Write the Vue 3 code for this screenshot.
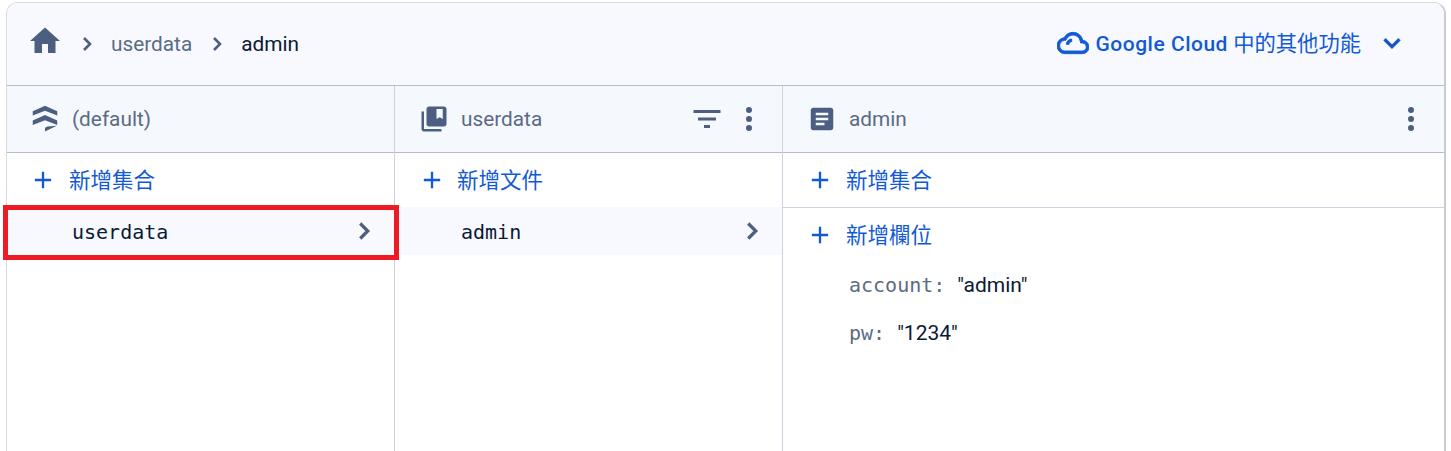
<script setup>
const columns = [
  { key: 'root', title: '(default)', add: '新增集合', item: 'userdata' },
  { key: 'coll', title: 'userdata', add: '新增文件', item: 'admin' }
]
const fields = [
  { name: 'account', value: '"admin"' },
  { name: 'pw', value: '"1234"' }
]
</script>

<template>
  <div class="page">
    <section class="card">
      <header class="topbar">
        <svg class="home" viewBox="0 0 24 24"><path d="M10 20v-6h4v6h5v-8h3L12 3 2 12h3v8z" /></svg>
        <svg class="crumb-arrow first" viewBox="0 0 24 24"><path d="M9 6l6 6-6 6" /></svg>
        <span class="crumb">userdata</span>
        <svg class="crumb-arrow" viewBox="0 0 24 24"><path d="M9 6l6 6-6 6" /></svg>
        <span class="crumb current">admin</span>
        <div class="more">
          <svg class="cloud" viewBox="0 0 24 24"><path d="M19.35 10.04A7.49 7.49 0 0 0 12 4C9.11 4 6.6 5.64 5.35 8.04A5.994 5.994 0 0 0 0 14c0 3.31 2.69 6 6 6h13c2.76 0 5-2.24 5-5 0-2.64-2.05-4.78-4.65-4.96zM19 18H6c-2.21 0-4-1.79-4-4 0-2.05 1.53-3.76 3.56-3.97l1.07-.11.5-.95A5.469 5.469 0 0 1 12 6c2.62 0 4.88 1.86 5.39 4.43l.3 1.5 1.53.11A2.98 2.98 0 0 1 22 15c0 1.65-1.35 3-3 3zM7 13c0-2.2 1.8-4 4-4v2c-1.1 0-2 .9-2 2H7z" /></svg>
          <span class="more-text"><b>Google Cloud</b> 中的其他功能</span>
          <svg class="chevron" viewBox="0 0 24 24"><path d="M6 9l6 6 6-6" /></svg>
        </div>
      </header>

      <div class="columns">
        <div v-for="col in columns" :key="col.key" class="column" :class="col.key">
          <div class="col-head">
            <svg v-if="col.key === 'root'" class="head-icon" viewBox="0 0 24 24"><path d="M12 1.400L21.800 5.800v3.400L12 5.400 2.200 9.200V5.800zM12 8.800l9.800 4.400v3.600L12 12.900l-9.800 3.900v-3.600zM21.400 17.400L12 22v-3l2-1z" /></svg>
            <svg v-else class="head-icon" viewBox="0 0 24 24"><path d="M4 6H2v14c0 1.100.9 2 2 2h14v-2H4V6zm16-4H8c-1.100 0-2 .9-2 2v12c0 1.100.9 2 2 2h12c1.100 0 2-.9 2-2V4c0-1.100-.9-2-2-2zm-1 10l-2.500-1.500L14 12V4h5v8z" /></svg>
            <span class="head-title">{{ col.title }}</span>
            <template v-if="col.key === 'coll'">
              <svg class="filter" viewBox="0 0 24 24"><path d="M10 18h4v-2h-4v2zM3 6v2h18V6H3zm3 7h12v-2H6v2z" /></svg>
              <svg class="dots" viewBox="0 0 24 24"><path d="M12 8a2 2 0 1 0 0-4 2 2 0 0 0 0 4zm0 2a2 2 0 1 0 0 4 2 2 0 0 0 0-4zm0 6a2 2 0 1 0 0 4 2 2 0 0 0 0-4z" /></svg>
            </template>
          </div>
          <button class="add-row">
            <svg class="plus" viewBox="0 0 24 24"><path d="M19 13h-6v6h-2v-6H5v-2h6V5h2v6h6z" /></svg>
            <span class="add-label">{{ col.add }}</span>
          </button>
          <div class="item">
            <span class="item-name">{{ col.item }}</span>
            <svg class="item-arrow" viewBox="0 0 24 24"><path d="M9 6l6 6-6 6" /></svg>
          </div>
        </div>

        <div class="column last">
          <div class="col-head">
            <svg class="head-icon" viewBox="0 0 24 24"><path d="M19 3H5c-1.100 0-2 .9-2 2v14c0 1.100.9 2 2 2h14c1.100 0 2-.9 2-2V5c0-1.100-.9-2-2-2zm-5 14H7v-2h7v2zm3-4H7v-2h10v2zm0-4H7V7h10v2z" /></svg>
            <span class="head-title">admin</span>
            <svg class="dots solo" viewBox="0 0 24 24"><path d="M12 8a2 2 0 1 0 0-4 2 2 0 0 0 0 4zm0 2a2 2 0 1 0 0 4 2 2 0 0 0 0-4zm0 6a2 2 0 1 0 0 4 2 2 0 0 0 0-4z" /></svg>
          </div>
          <button class="add-row ruled">
            <svg class="plus" viewBox="0 0 24 24"><path d="M19 13h-6v6h-2v-6H5v-2h6V5h2v6h6z" /></svg>
            <span class="add-label">新增集合</span>
          </button>
          <button class="add-row">
            <svg class="plus" viewBox="0 0 24 24"><path d="M19 13h-6v6h-2v-6H5v-2h6V5h2v6h6z" /></svg>
            <span class="add-label">新增欄位</span>
          </button>
          <div class="fields">
            <div v-for="f in fields" :key="f.name" class="field">
              <span class="field-name">{{ f.name }}:</span>
              <span class="field-value">{{ f.value }}</span>
            </div>
          </div>
        </div>
      </div>
    </section>
  </div>
</template>

<style scoped>
.page {
  width: 1451px;
  height: 451px;
  overflow: hidden;
  background: #fff;
  padding: 2px 5px 0 6px;
  box-sizing: border-box;
  font-family: Roboto, "Noto Sans CJK TC", sans-serif;
}
.card {
  height: 460px;
  border: 1px solid #d9dbe0;
  border-right: 2px solid #c9ccd3;
  border-bottom: none;
  border-radius: 12px 12px 0 0;
  box-sizing: border-box;
}
svg {
  display: block;
  flex: none;
  fill: #4d5f80;
}
.topbar {
  height: 82px;
  background: #f7f9fe;
  border-bottom: 1px solid #b4bccd;
  border-radius: 11px 11px 0 0;
  display: flex;
  align-items: center;
  padding: 0 37px 0 20px;
}
.home {
  width: 36px;
  height: 36px;
  margin-top: -6px;
}
.crumb-arrow {
  width: 24px;
  height: 24px;
  fill: none;
  stroke: #4d5f80;
  stroke-width: 2.6;
  margin: 0 12px 0 13px;
}
.crumb-arrow.first {
  margin: 0 12px;
}
.crumb {
  font-size: 20.800px;
  color: #5b6b85;
}
.current {
  color: #0b1a33;
}
.more {
  margin-left: auto;
  display: flex;
  align-items: center;
  color: #1259d4;
  padding-bottom: 2px;
}
.cloud {
  width: 32px;
  height: 32px;
  fill: #1259d4;
  stroke: #1259d4;
  stroke-width: 0.7;
  margin-right: 7px;
}
.more-text {
  font-size: 21.300px;
  padding-bottom: 4px;
}
.more-text b {
  font-size: 21px;
  font-weight: 500;
  letter-spacing: 0.5px;
}
.chevron {
  width: 30px;
  height: 30px;
  fill: none;
  stroke: #1a56c4;
  stroke-width: 2.6;
  margin-left: 16px;
}
.columns {
  display: grid;
  grid-template-columns: 388px 388px 1fr;
}
.column {
  border-right: 1px solid #ccd2de;
  height: 370px;
}
.column.last {
  border-right: none;
}
.col-head {
  height: 67px;
  background: #f5f8fd;
  border-bottom: 1px solid #b4bccd;
  display: flex;
  align-items: center;
  padding: 0 15px 0 24px;
  box-sizing: border-box;
}
.root .col-head {
  padding-left: 23px;
}
.head-icon {
  width: 30px;
  height: 30px;
  margin-right: 12px;
}
.head-title {
  font-size: 20.800px;
  color: #5b6b85;
}
.filter {
  width: 36px;
  height: 36px;
  margin-left: auto;
}
.dots {
  width: 36px;
  height: 36px;
  margin-left: 6px;
}
.dots.solo {
  margin-left: auto;
}
.add-row {
  display: flex;
  align-items: center;
  width: 100%;
  height: 54px;
  padding: 0 0 0 23px;
  border: none;
  background: #fff;
  color: #1259d4;
  font: inherit;
  font-size: 21.500px;
  box-sizing: border-box;
}
.add-row.ruled {
  height: 55px;
  border-bottom: 1px solid #ccd2de;
}
.add-label {
  padding-bottom: 4px;
}
.root .add-row {
  padding-left: 22px;
}
.plus {
  width: 28px;
  height: 28px;
  fill: #1259d4;
  margin-right: 11px;
}
.root .plus,
.last .plus {
  margin-right: 12px;
}
.item {
  position: relative;
  display: flex;
  align-items: center;
  justify-content: space-between;
  height: 48px;
  background: #f7f9fe;
  padding: 0 15px 0 66px;
  box-sizing: border-box;
}
.root .item {
  padding-left: 65px;
}
/* marca roja encima de la fila, se sale de la tarjeta */
.root .item::after {
  content: "";
  position: absolute;
  z-index: 1;
  top: -2px;
  right: -5px;
  bottom: -5px;
  left: -4px;
  border: 5px solid #ed1c24;
  pointer-events: none;
}
.item-name {
  font-family: "DejaVu Sans Mono", monospace;
  font-size: 20px;
  color: #0b1a33;
  padding-top: 2px;
}
.item-arrow {
  width: 30px;
  height: 30px;
  fill: none;
  stroke: #4d5f80;
  stroke-width: 2.6;
}
.fields {
  margin-top: -1px;
  padding-left: 66px;
}
.field {
  height: 48px;
  display: flex;
  align-items: center;
  font-size: 21px;
}
.field-name {
  font-family: "DejaVu Sans Mono", monospace;
  font-size: 20px;
  color: #5b6b85;
  margin-right: 12px;
}
.field-value {
  color: #0b1a33;
}
</style>
